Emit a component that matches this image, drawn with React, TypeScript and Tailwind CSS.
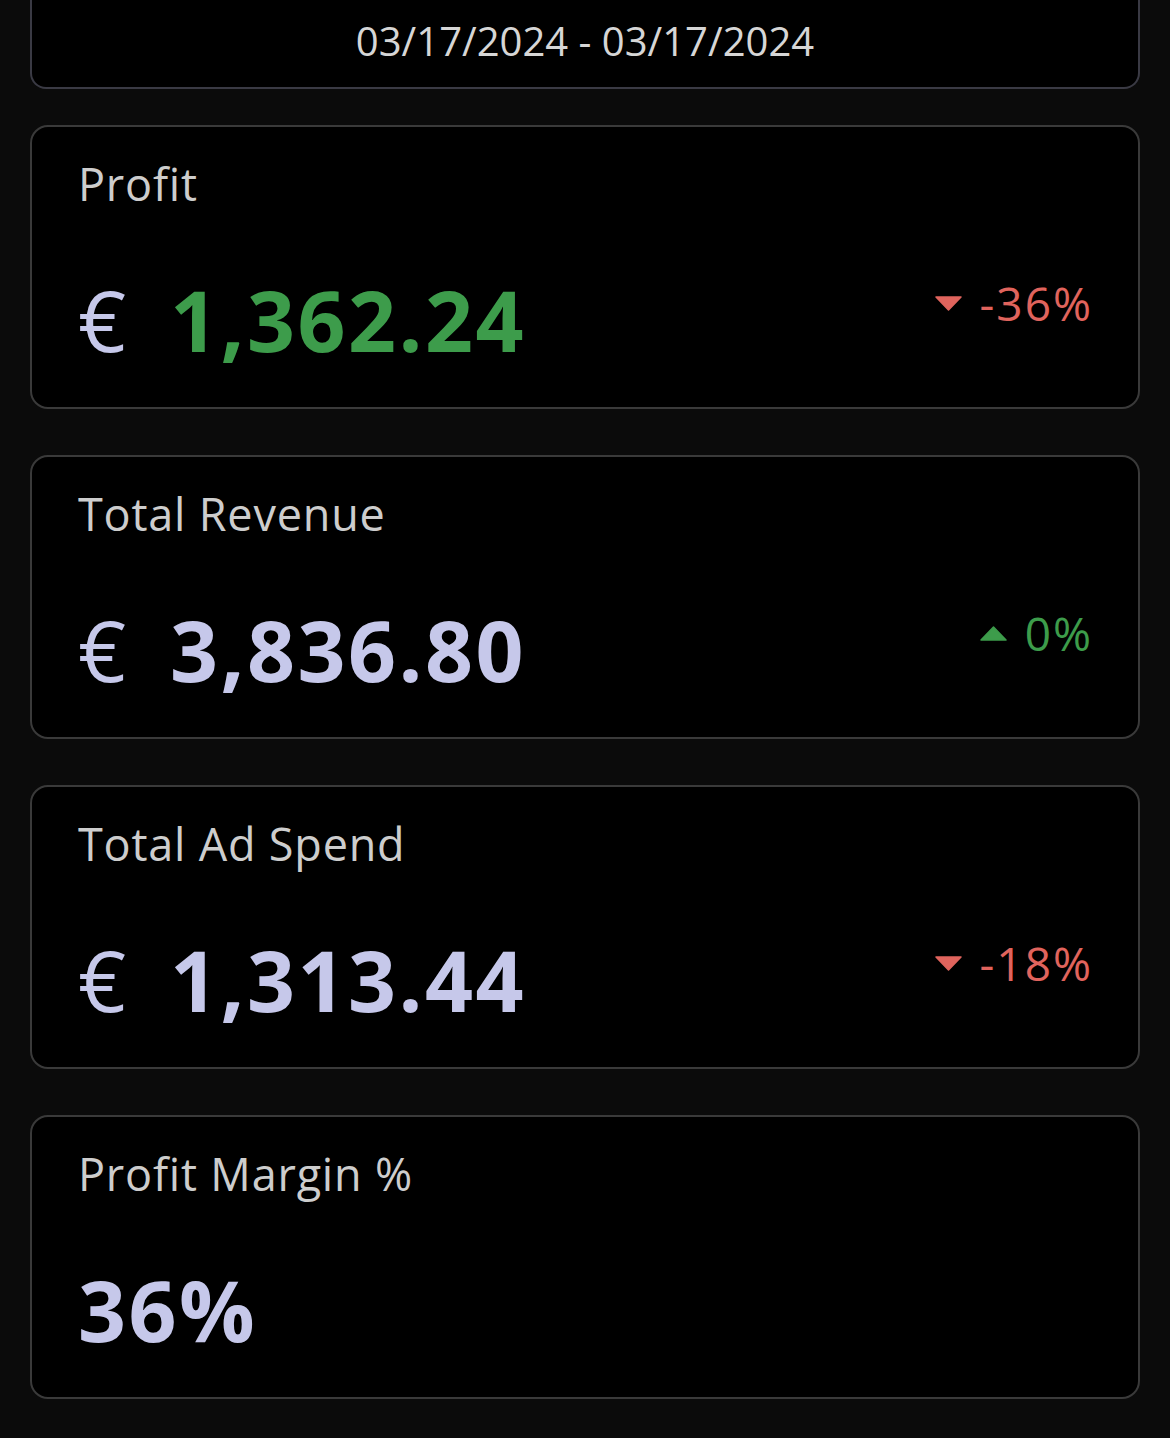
import React from "react";

type Trend = { dir: "up" | "down"; text: string };

function TrendBadge({ trend }: { trend: Trend }) {
  const up = trend.dir === "up";
  return (
    <div className={`mt-[2px] flex items-center gap-[18px] ${up ? "text-[#3d9c4b]" : "text-[#e0645d]"}`}>
      <svg width="27" height="15" viewBox="0 0 27 15" className="block">
        {up ? (
          <path d="M13.5 1 L26 14 L1 14 Z" fill="currentColor" strokeLinejoin="round" stroke="currentColor" strokeWidth="1.5" />
        ) : (
          <path d="M1 1 L26 1 L13.5 14 Z" fill="currentColor" strokeLinejoin="round" stroke="currentColor" strokeWidth="1.5" />
        )}
      </svg>
      <span className="mr-[-1px] text-[46px] leading-none font-medium tracking-[2px]">{trend.text}</span>
    </div>
  );
}

function Card({
  label,
  value,
  valueColor,
  euro,
  trend,
}: {
  label: string;
  value: string;
  valueColor: string;
  euro?: boolean;
  trend?: Trend;
}) {
  return (
    <div className="h-[284px] rounded-[18px] border-2 border-[#3a3a3a] bg-black px-[46px] pt-[34px] pb-[45px]">
      <div className="text-[45px] leading-none tracking-[0.8px] text-[#cdcdcd]">{label}</div>
      <div className="mt-[72px] flex items-start justify-between">
        <div className="flex items-baseline gap-[44px] text-[84px] leading-none">
          {euro && <span className="font-medium text-[#c6c8ea]">€</span>}
          <span className={`font-bold tracking-[2.5px] ${valueColor}`}>{value}</span>
        </div>
        {trend && <TrendBadge trend={trend} />}
      </div>
    </div>
  );
}

export default function App() {
  return (
    <div
      className="min-h-[1438px] w-full bg-[#0b0b0b] px-[30px] pb-[38px]"
      style={{ fontFamily: '"Open Sans", "Noto Sans", sans-serif' }}
    >
      <div className="flex h-[89px] justify-center rounded-b-[16px] border-2 border-t-0 border-[#3a3a44] bg-black pt-[21px]">
        <span className="text-[40px] leading-none text-[#d6d6d6]">03/17/2024 - 03/17/2024</span>
      </div>
      <div className="mt-[36px] flex flex-col gap-[46px]">
        <Card label="Profit" value="1,362.24" valueColor="text-[#3d9c4b]" euro trend={{ dir: "down", text: "-36%" }} />
        <Card label="Total Revenue" value="3,836.80" valueColor="text-[#c6c8ea]" euro trend={{ dir: "up", text: "0%" }} />
        <Card label="Total Ad Spend" value="1,313.44" valueColor="text-[#c6c8ea]" euro trend={{ dir: "down", text: "-18%" }} />
        <Card label="Profit Margin %" value="36%" valueColor="text-[#c6c8ea]" />
      </div>
    </div>
  );
}
